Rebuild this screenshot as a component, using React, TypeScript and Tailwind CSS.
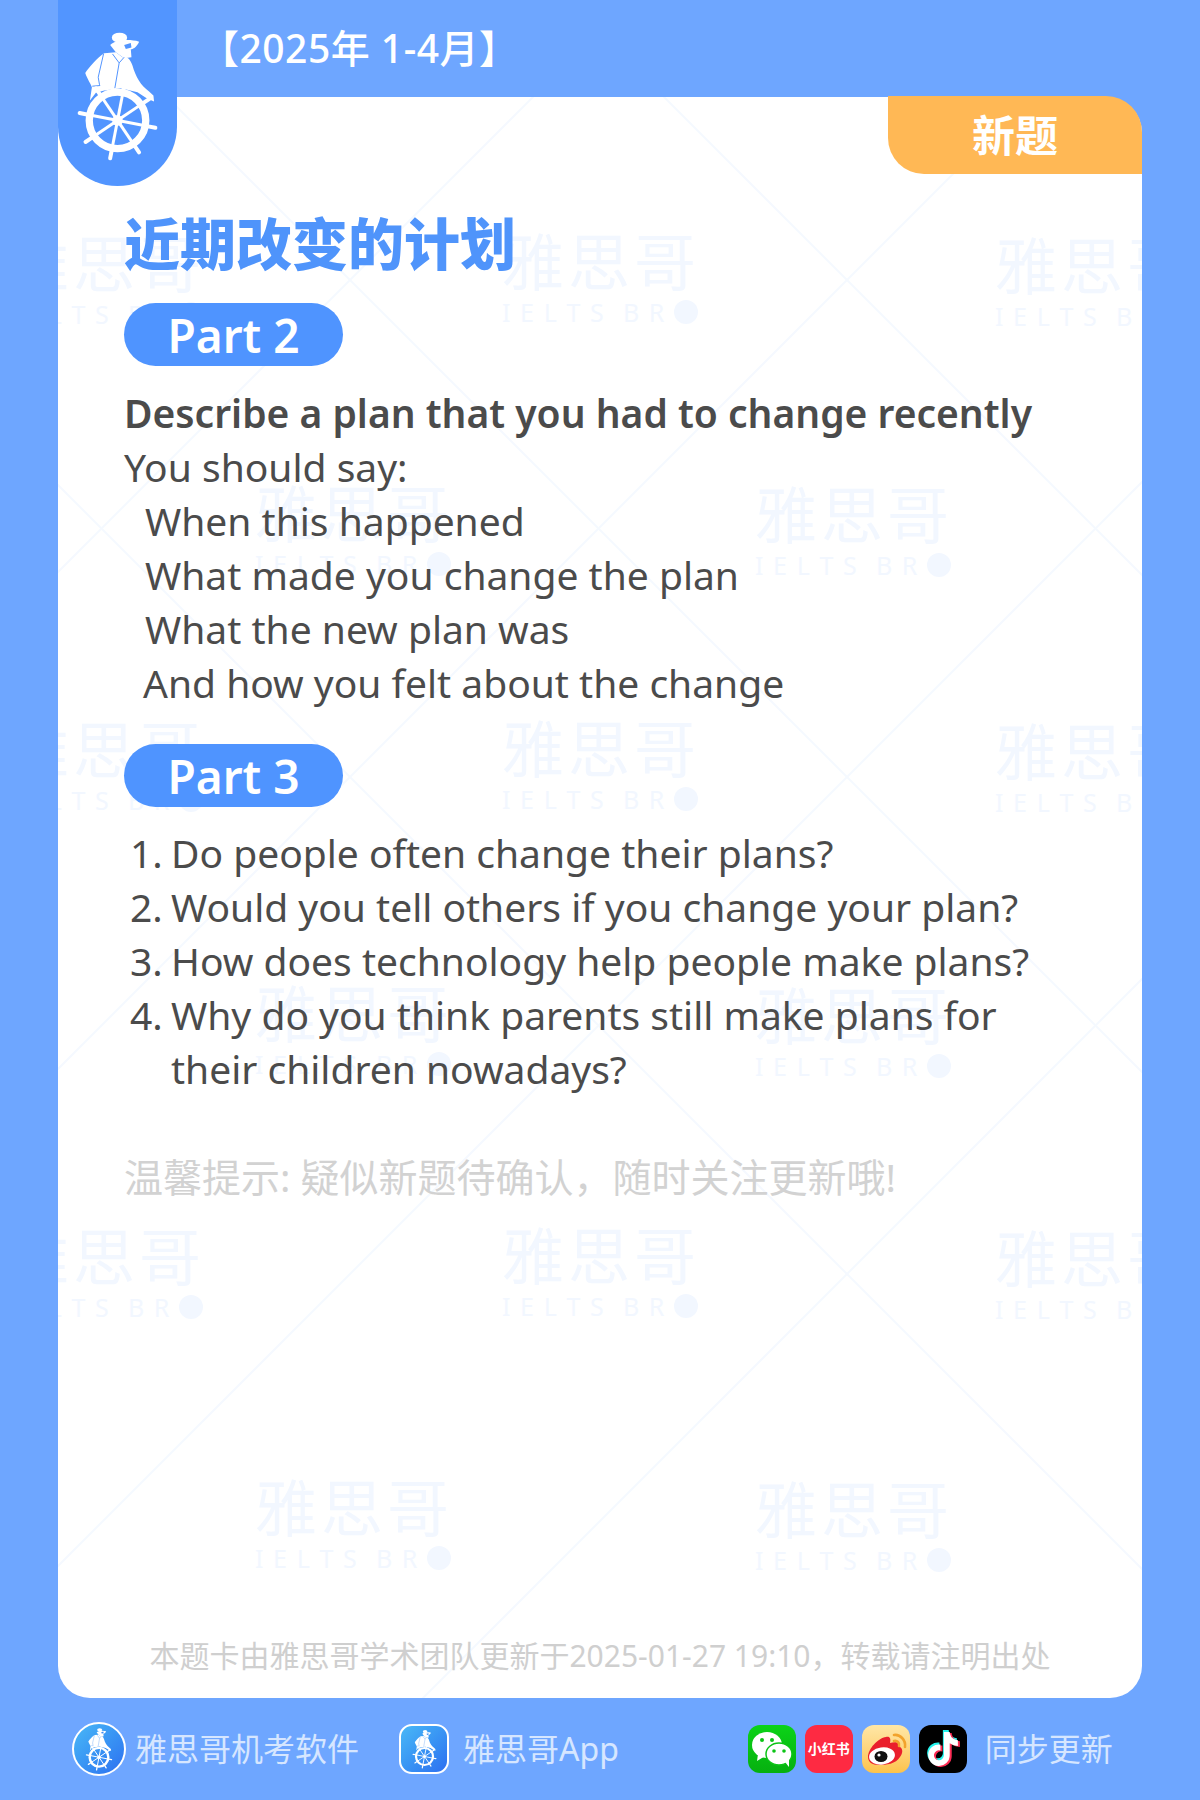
import { FaTiktok } from 'react-icons/fa6';

const cjk = '"Noto Sans", "Noto Sans CJK SC", sans-serif';

const angles = [11, 56, 101, 146, 191, 236, 281, 326];

const point = (deg: number, r: number) => ({
  x: 230 + r * Math.cos((deg * Math.PI) / 180),
  y: 355 + r * Math.sin((deg * Math.PI) / 180),
});

// man at the ship's wheel, coordinates are 3x the reference pixels
const Helmsman = ({ className, fill = '#ffffff', ink = '#5295ff' }: { className: string; fill?: string; ink?: string }) => (
  <svg viewBox="100 80 260 400" className={className}>
    <ellipse cx="236" cy="106" rx="23" ry="15" fill={fill} />
    <path d="M208 128 C225 112 265 110 295 118 C290 130 280 140 270 141 L272 165 L250 168 L225 150 Z" fill={fill} />
    <path d="M250 128 L270 122 L272 136 L255 140 Z" fill={ink} />
    <path
      d="M190 153 C170 165 145 195 133 212 C140 232 150 245 153 255 L147 295 L165 272 L190 265 L240 258 L290 270 L320 290 L340 298 L338 280 L325 268 C300 250 285 225 275 190 C270 175 265 170 258 165 L245 165 L225 150 Z"
      fill={fill}
    />
    <path d="M188 155 L172 225 L176 248 M215 155 L235 182 L250 165 M235 182 L222 258 M154 252 L178 250" stroke={ink} strokeWidth="3" fill="none" />
    <circle cx="230" cy="355" r="85" fill="none" stroke={fill} strokeWidth="22" />
    <circle cx="230" cy="355" r="16" fill={fill} />
    {angles.map((a) => {
      const from = point(a, 10);
      const to = point(a, 85);
      const h1 = point(a, 90);
      const h2 = point(a, 116);
      return (
        <g key={a}>
          <line x1={from.x} y1={from.y} x2={to.x} y2={to.y} stroke={fill} strokeWidth="9" />
          <line x1={h1.x} y1={h1.y} x2={h2.x} y2={h2.y} stroke={fill} strokeWidth="12" strokeLinecap="round" />
        </g>
      );
    })}
  </svg>
);

const marks = [
  [7, 232], [502, 230], [995, 234],
  [255, 482], [755, 483],
  [7, 718], [502, 717], [995, 720],
  [255, 982], [755, 984],
  [7, 1225], [502, 1224], [995, 1227],
  [255, 1476], [755, 1478],
];

const diagonals = [-1, 0, 1, 2, 3, 4];

const Watermark = () => (
  <div className="absolute inset-0 overflow-hidden rounded-[32px]">
    <svg viewBox="58 97 1084 1601" className="absolute inset-0 h-full w-full">
      {diagonals.map((k) => (
        <g key={k} stroke="#f5f9ff" strokeWidth="2">
          <line x1={70 + 497 * k} y1={0} x2={70 + 497 * k + 1800} y2={1800} />
          <line x1={133 + 497 * k} y1={0} x2={133 + 497 * k - 1800} y2={1800} />
        </g>
      ))}
    </svg>
    {marks.map(([x, y]) => (
      <div key={`${x}-${y}`} className="absolute w-[196px] text-[#f2f7ff]" style={{ left: x - 58, top: y - 97 }}>
        <div className="whitespace-nowrap text-[62px] leading-[64px] tracking-[4px] font-normal">雅思哥</div>
        <div className="mt-[3px] flex items-center justify-between text-[25px] leading-[30px]">
          {['I', 'E', 'L', 'T', 'S', '', 'B', 'R'].map((c, i) => (
            <span key={i}>{c}</span>
          ))}
          <span className="h-[24px] w-[24px] rounded-full bg-[#f2f7ff]" />
        </div>
      </div>
    ))}
  </div>
);

const PartPill = ({ label }: { label: string }) => (
  <div className="flex h-[63px] w-[219px] items-center justify-center rounded-full bg-[#4f94ff] text-[46px] font-semibold text-white">
    {label}
  </div>
);

const questions = [
  'Do people often change their plans?',
  'Would you tell others if you change your plan?',
  'How does technology help people make plans?',
];

const WeChatIcon = () => (
  <svg viewBox="0 0 48 48" className="h-12 w-12 rounded-[12px] bg-gradient-to-b from-[#0bd318] to-[#06b00f]">
    <ellipse cx="19" cy="20" rx="15" ry="13" fill="#fff" />
    <path d="M10 29 L9 36 L17 31 Z" fill="#fff" />
    <ellipse cx="31" cy="29" rx="13" ry="11" fill="#fff" stroke="#0bc415" strokeWidth="1.5" />
    <path d="M37 37 L41 42 L41 33 Z" fill="#fff" />
    <circle cx="14" cy="15" r="2" fill="#0bc415" />
    <circle cx="24" cy="15" r="2" fill="#0bc415" />
    <circle cx="26" cy="26" r="1.8" fill="#0bc415" />
    <circle cx="36" cy="26" r="1.8" fill="#0bc415" />
  </svg>
);

const WeiboIcon = () => (
  <svg viewBox="0 0 48 48" className="h-12 w-12 rounded-[12px] bg-gradient-to-b from-[#ffe7a6] to-[#fdc34a]">
    <path d="M6 32 C6 24 16 13 24 12 C28 11 29 14 28 18 C34 16 38 18 38 22 C41 24 41 28 38 32 C34 39 24 40 17 40 C10 40 6 37 6 32 Z" fill="#ea1f2c" />
    <ellipse cx="20" cy="31" rx="13" ry="8.5" fill="#fff" transform="rotate(-8 20 31)" />
    <ellipse cx="19" cy="31.5" rx="6.5" ry="5.5" fill="#111" />
    <circle cx="17" cy="30" r="1.6" fill="#fff" />
    <path d="M32 10 C38 9 44 15 43 22 M32 16 C35 15 38 18 37 21" fill="none" stroke="#f2a32c" strokeWidth="2.6" strokeLinecap="round" />
  </svg>
);

const TikTokIcon = () => (
  <div className="relative h-12 w-12 rounded-[12px] bg-black">
    <FaTiktok className="absolute left-[6px] top-[5px] text-[#25f4ee]" size={34} />
    <FaTiktok className="absolute left-[9px] top-[8px] text-[#fe2c55]" size={34} />
    <FaTiktok className="absolute left-[7.5px] top-[6.5px] text-white" size={34} />
  </div>
);

const App = () => {
  return (
    <div
      className="relative flex h-[1800px] w-[1200px] flex-col bg-[#6ea6ff] px-[58px]"
      style={{ fontFamily: cjk }}
    >
      <div className="flex h-[97px] items-center pl-[142px] text-[39px] font-medium tracking-[0.5px] text-white">
        【2025年 1-4月】
      </div>

      <div className="relative h-[1601px] rounded-b-[32px] rounded-tr-[36px] bg-white">
        <Watermark />

        <div className="absolute right-0 top-[-1px] flex h-[78px] w-[254px] items-center justify-center rounded-bl-[36px] rounded-tr-[36px] bg-[#ffb855] text-[43px] font-bold leading-none text-white">
          新题
        </div>

        <div className="relative flex h-full flex-col pl-[66px] text-[39px] leading-[54px] text-[#4b4b4b]">
          <h1 className="mt-[116px] text-[56px] font-black leading-[60px] text-[#4f94fb]">近期改变的计划</h1>
          <div className="mt-[30px]">
            <PartPill label="Part 2" />
          </div>
          <p className="mt-[20px] whitespace-nowrap font-semibold">Describe a plan that you had to change recently</p>
          <p>You should say:</p>
          <p className="pl-[21px]">When this happened</p>
          <p className="pl-[21px]">What made you change the plan</p>
          <p className="pl-[21px]">What the new plan was</p>
          <p className="pl-[19px]">And how you felt about the change</p>
          <div className="mt-[34px]">
            <PartPill label="Part 3" />
          </div>
          <ol className="mt-[19px]">
            {questions.map((q, i) => (
              <li key={q} className="flex whitespace-nowrap">
                <span className="w-[47px] pl-[6px]">{i + 1}.</span>
                <span>{q}</span>
              </li>
            ))}
            <li className="flex">
              <span className="w-[47px] pl-[6px]">4.</span>
              <span className="w-[900px]">Why do you think parents still make plans for their children nowadays?</span>
            </li>
          </ol>
          <p className="mt-[54px] whitespace-nowrap text-[#d2d2d2]">温馨提示: 疑似新题待确认，随时关注更新哦!</p>
          <p className="mt-auto mb-[21px] -ml-[66px] text-center text-[30px] leading-[42px] text-[#cfcfcf]">
            本题卡由雅思哥学术团队更新于2025-01-27 19:10，转载请注明出处
          </p>
        </div>
      </div>

      <div className="flex flex-1 items-center pl-[14px] text-[32px] text-[#d6e6ff]">
        <div className="flex h-[54px] w-[54px] items-center justify-center rounded-full border-2 border-white bg-gradient-to-br from-[#4ab8f6] to-[#2f6ff0]">
          <Helmsman className="h-[44px] w-[30px]" ink="#3d8cf2" />
        </div>
        <span className="ml-[9px]">雅思哥机考软件</span>
        <div className="ml-[40px] flex h-[50px] w-[50px] items-center justify-center rounded-[13px] border-2 border-white bg-gradient-to-br from-[#4ab8f6] to-[#2f6ff0]">
          <Helmsman className="h-[40px] w-[27px]" ink="#3d8cf2" />
        </div>
        <span className="ml-[14px]">雅思哥App</span>
        <div className="ml-[129px] flex items-center gap-[9px]">
          <WeChatIcon />
          <div className="flex h-12 w-12 items-center justify-center rounded-[12px] bg-[#fe2a42] text-[14px] font-bold leading-none text-white">
            小红书
          </div>
          <WeiboIcon />
          <TikTokIcon />
        </div>
        <span className="ml-[18px]">同步更新</span>
      </div>

      <div className="absolute left-[58px] top-0 flex h-[186px] w-[119px] items-start justify-center rounded-b-[60px] bg-[#5295ff] pt-[29px]">
        <Helmsman className="h-[133px] w-[87px]" />
      </div>
    </div>
  );
};

export default App;
